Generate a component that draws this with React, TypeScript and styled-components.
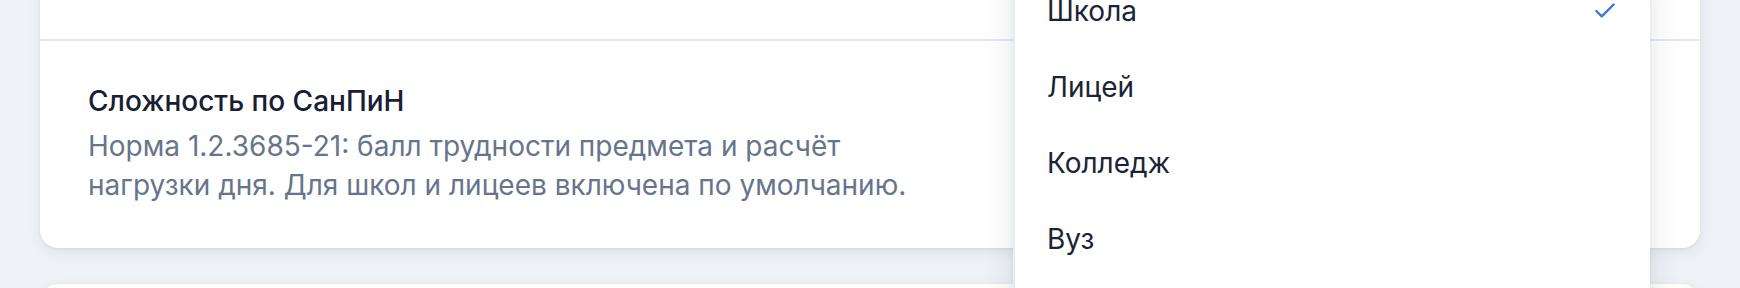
import React from "react";
import styled, { createGlobalStyle } from "styled-components";
import { Check } from "lucide-react";

const GlobalStyle = createGlobalStyle`
  html, body {
    margin: 0;
    padding: 0;
    background: #eef2f7;
    font-family: Inter, "Noto Sans", sans-serif;
  }
`;

const Page = styled.div`
  position: relative;
  height: 288px;
  overflow: hidden;
  padding: 0 40px;
`;

const Stack = styled.div`
  display: flex;
  flex-direction: column;
  gap: 36px;
  margin-top: -41px;
`;

const Card = styled.section`
  background: #ffffff;
  border-radius: 18px;
  box-shadow: 0 4px 14px rgba(30, 41, 59, 0.07), 0 1px 3px rgba(30, 41, 59, 0.08);
`;

const Row = styled.div<{ $divider?: boolean }>`
  padding: 40px 48px 43px;
  border-top: ${(p) => (p.$divider ? "2px solid #e4e8f1" : "none")};
`;

const TopRow = styled.div`
  height: 80px;
`;

const Title = styled.div`
  font-size: 28px;
  font-weight: 500;
  line-height: 40px;
  color: #172033;
`;

const Description = styled.p`
  margin: 6px 0 0;
  max-width: 860px;
  font-size: 28px;
  line-height: 39px;
  color: #66758c;
`;

const Menu = styled.ul`
  position: absolute;
  top: -36px;
  left: 1013px;
  width: 635px;
  height: 360px;
  margin: 0;
  padding: 9px 0;
  list-style: none;
  background: #ffffff;
  border-left: 2px solid #e9ecf2;
  box-shadow: 0 10px 30px rgba(30, 41, 59, 0.12), 0 2px 6px rgba(30, 41, 59, 0.06);
`;

const Item = styled.li`
  display: flex;
  align-items: center;
  justify-content: space-between;
  height: 76px;
  padding: 0 32px;
  font-size: 28px;
  color: #1b2436;
`;

const Tick = styled(Check)`
  color: #3a78d8;
`;

const options = ["Школа", "Лицей", "Колледж", "Вуз"];

export default function App() {
  return (
    <>
      <GlobalStyle />
      <Page>
        <Stack>
          <Card>
            <TopRow />
            <Row $divider>
              <Title>Сложность по СанПиН</Title>
              <Description>
                Норма 1.2.3685-21: балл трудности предмета и расчёт нагрузки дня. Для школ и лицеев включена по
                умолчанию.
              </Description>
            </Row>
          </Card>
          <Card>
            <TopRow />
          </Card>
        </Stack>
        <Menu>
          {options.map((o, i) => (
            <Item key={o}>
              {o}
              {i === 0 && <Tick size={26} strokeWidth={2.2} />}
            </Item>
          ))}
        </Menu>
      </Page>
    </>
  );
}
